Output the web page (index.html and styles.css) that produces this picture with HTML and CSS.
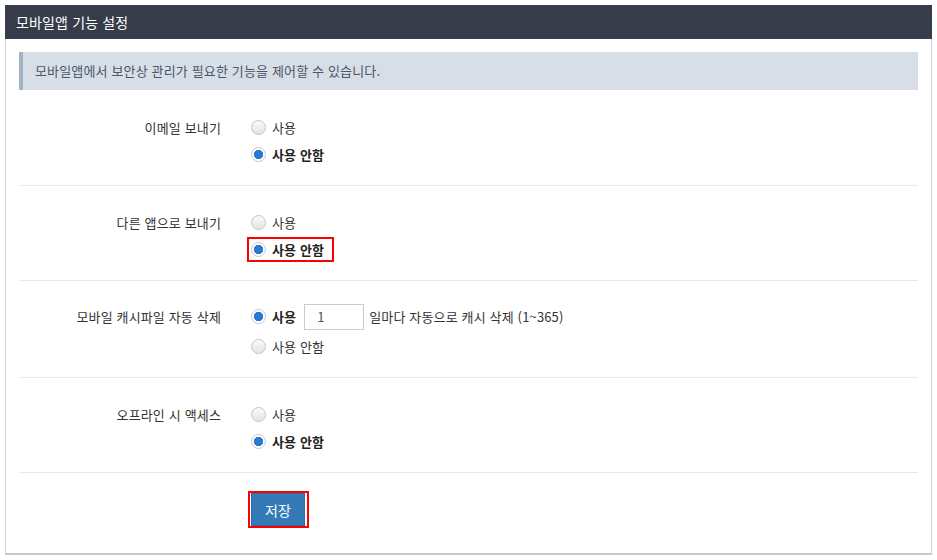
FILE: index.html
```html
<!DOCTYPE html>
<html lang="ko">
<head>
  <meta charset="UTF-8" />
  <meta name="viewport" content="width=device-width, initial-scale=1" />
  <title>모바일앱 기능 설정</title>
  <link rel="stylesheet" href="styles.css">
</head>
<body>
  <div class="panel">
    <div class="panel-head">모바일앱 기능 설정</div>
    <div class="panel-body">
      <div class="notice">모바일앱에서 보안상 관리가 필요한 기능을 제어할 수 있습니다.</div>

      <div class="form-row">
        <div class="form-label">이메일 보내기</div>
        <div class="form-field">
          <label class="opt"><span class="radio"></span>사용</label>
          <label class="opt on"><span class="radio checked"></span>사용 안함</label>
        </div>
      </div>

      <div class="form-row">
        <div class="form-label">다른 앱으로 보내기</div>
        <div class="form-field">
          <label class="opt"><span class="radio"></span>사용</label>
          <label class="opt on marked"><span class="radio checked"></span>사용 안함</label>
        </div>
      </div>

      <div class="form-row with-input">
        <div class="form-label">모바일 캐시파일 자동 삭제</div>
        <div class="form-field">
          <div class="opt-line">
            <label class="opt on"><span class="radio checked"></span>사용</label>
            <input class="days" type="text" value="1" />
            <span class="hint">일마다 자동으로 캐시 삭제 (1~365)</span>
          </div>
          <label class="opt"><span class="radio"></span>사용 안함</label>
        </div>
      </div>

      <div class="form-row">
        <div class="form-label">오프라인 시 액세스</div>
        <div class="form-field">
          <label class="opt"><span class="radio"></span>사용</label>
          <label class="opt on"><span class="radio checked"></span>사용 안함</label>
        </div>
      </div>

      <div class="form-actions">
        <span class="mark"><button class="btn-save">저장</button></span>
      </div>
    </div>
  </div>
</body>
</html>
```

FILE: styles.css
```css
/* Base */
* {
  box-sizing: border-box;
}
body {
  margin: 5px;
  font-family: "Noto Sans CJK KR", "Noto Sans", sans-serif;
  font-size: 13px;
  letter-spacing: 0.15px;
  color: #333;
  background: #fff;
}

/* Panel */
.panel {
  width: 927px;
  border-left: 1px solid #d0d0d0;
  border-right: 1px solid #d0d0d0;
  border-bottom: 2px solid #c8c8c8;
}
.panel-head {
  height: 34px;
  margin: 0 -1px 0 -1px;
  padding: 0 11px;
  background: #363c4a;
  color: #fff;
  font-size: 14px;
  line-height: 34px;
}
.panel-body {
  padding: 13px 13px 25px 13px;
}

/* Notice */
.notice {
  height: 38px;
  padding: 0 12px;
  border-left: 4px solid #a0b4c6;
  background: #d7dee7;
  color: #4a5668;
  line-height: 38px;
}

/* Form rows */
.form-row {
  display: flex;
  padding: 23px 0 17px;
  border-bottom: 1px solid #e8e8e8;
}
.form-row:nth-of-type(2) {
  padding-top: 24px;
}
.form-row.with-input {
  padding: 19px 0 17px;
}
.form-label {
  width: 202px;
  flex-shrink: 0;
  text-align: right;
  line-height: 27px;
}
.with-input .form-label {
  line-height: 33px;
}
.form-field {
  margin-left: 30px;
}
.opt {
  position: relative;
  display: flex;
  align-items: center;
  width: fit-content;
  height: 27px;
  cursor: pointer;
}
.opt.on {
  font-weight: bold;
  color: #222;
}
.opt-line {
  display: flex;
  align-items: center;
  height: 33px;
}
.radio {
  width: 15px;
  height: 15px;
  margin-right: 6px;
  border: 1px solid #c4c4c4;
  border-radius: 50%;
  background: linear-gradient(#fafafa, #e4e4e4);
}
.radio.checked {
  border-color: #c8c8c8;
  background: radial-gradient(circle, #2a79d2 0, #2a79d2 4.4px, #fff 5px);
}
.opt.marked::after {
  content: "";
  position: absolute;
  top: 1px;
  bottom: 1px;
  left: -4px;
  right: -10px;
  border: 2px solid #f00;
}
.days {
  width: 60px;
  height: 26px;
  margin: 0 5px 0 8px;
  padding: 0 12px;
  border: 1px solid #ccc;
  font-family: inherit;
  font-size: 13px;
  color: #555;
}
.hint {
  color: #333;
}

/* Actions */
.form-actions {
  padding: 18px 0 0 229px;
}
.mark {
  display: inline-block;
  padding: 0 2px 0 1px;
  border: 2px solid #f00;
}
.btn-save {
  display: block;
  height: 33px;
  padding: 0 13px;
  border: 1px solid #2e6da4;
  background: #337ab7;
  color: #fff;
  font-family: inherit;
  font-size: 14px;
  cursor: pointer;
}
```
